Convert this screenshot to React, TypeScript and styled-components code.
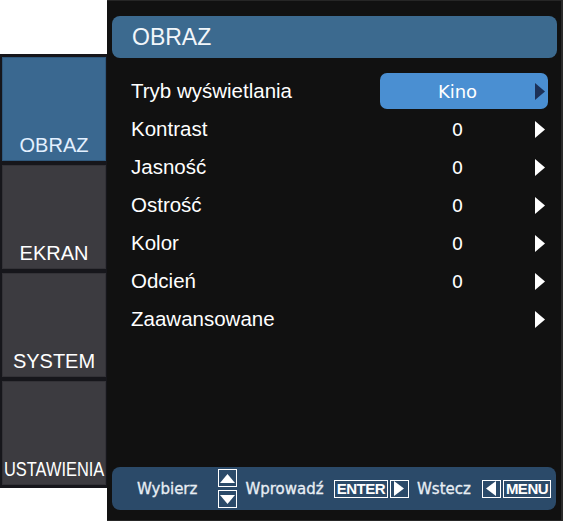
import React from "react";
import styled, { createGlobalStyle } from "styled-components";

type TabProp = {
	isActive?: boolean;
	squeeze?: number;
};

type PillProp = {
	isSelected?: boolean;
};

const tabs = ["OBRAZ", "EKRAN", "SYSTEM", "USTAWIENIA"];

const rows: { label: string; value?: string }[] = [
	{ label: "Tryb wyświetlania", value: "Kino" },
	{ label: "Kontrast", value: "0" },
	{ label: "Jasność", value: "0" },
	{ label: "Ostrość", value: "0" },
	{ label: "Kolor", value: "0" },
	{ label: "Odcień", value: "0" },
	{ label: "Zaawansowane" },
];

const Triangle = ({
	dir,
	color,
	w,
	h,
}: {
	dir: "left" | "right" | "up" | "down";
	color: string;
	w: number;
	h: number;
}) => {
	const pts = {
		right: `0,0 ${w},${h / 2} 0,${h}`,
		left: `${w},0 0,${h / 2} ${w},${h}`,
		up: `0,${h} ${w / 2},0 ${w},${h}`,
		down: `0,0 ${w},0 ${w / 2},${h}`,
	}[dir];
	return (
		<svg width={w} height={h} viewBox={`0 0 ${w} ${h}`}>
			<polygon points={pts} fill={color} />
		</svg>
	);
};

export default function App() {
	return (
		<>
			<GlobalStyle />
			<StyledScreen>
				<StyledSideTabs>
					{tabs.map((t, i) => (
						<StyledTab key={t} isActive={i === 0}>
							<StyledTabLabel squeeze={t === "USTAWIENIA" ? 0.82 : 1}>
								{t}
							</StyledTabLabel>
						</StyledTab>
					))}
				</StyledSideTabs>
				<StyledPanel>
					<StyledTitleBar>OBRAZ</StyledTitleBar>
					<StyledMenu>
						{rows.map((row, i) => (
							<StyledRow key={row.label}>
								<StyledLabel>{row.label}</StyledLabel>
								<StyledValuePill isSelected={i === 0}>
									<StyledValue>{row.value ?? ""}</StyledValue>
									<StyledArrow>
										<Triangle
											dir="right"
											w={10}
											h={17}
											color={i === 0 ? "#1c3158" : "#ffffff"}
										/>
									</StyledArrow>
								</StyledValuePill>
							</StyledRow>
						))}
					</StyledMenu>
					<StyledFooter>
						<StyledHint gap={21}>Wybierz</StyledHint>
						<StyledUpDown>
							<StyledKeyBox>
								<Triangle dir="up" w={15} h={9} color="#ffffff" />
							</StyledKeyBox>
							<StyledKeyBox>
								<Triangle dir="down" w={15} h={9} color="#ffffff" />
							</StyledKeyBox>
						</StyledUpDown>
						<StyledHint gap={10}>Wprowadź</StyledHint>
						<StyledKeyGroup>
							<StyledKeyText>ENTER</StyledKeyText>
							<StyledKeyBox>
								<Triangle dir="right" w={10} h={15} color="#ffffff" />
							</StyledKeyBox>
						</StyledKeyGroup>
						<StyledHint gap={11}>Wstecz</StyledHint>
						<StyledKeyGroup>
							<StyledKeyBox>
								<Triangle dir="left" w={10} h={15} color="#ffffff" />
							</StyledKeyBox>
							<StyledKeyText>MENU</StyledKeyText>
						</StyledKeyGroup>
					</StyledFooter>
				</StyledPanel>
			</StyledScreen>
		</>
	);
}

const GlobalStyle = createGlobalStyle`
	html, body {
		margin: 0;
		padding: 0;
		background: #ffffff;
	}
	* {
		box-sizing: border-box;
	}
`;

const StyledScreen = styled.div`
	display: flex;
	align-items: flex-start;
	width: 563px;
	height: 521px;
	font-family: "Liberation Sans", Arial, sans-serif;
`;

const StyledSideTabs = styled.div`
	display: flex;
	flex-direction: column;
	gap: 4px;
	width: 107px;
	margin-top: 54px;
	padding: 3px 1px 3px 2px;
	background: #16161b;
`;

const StyledTab = styled.div<TabProp>`
	display: flex;
	align-items: flex-end;
	justify-content: center;
	height: 104px;
	padding-bottom: 5px;
	background: ${(p) => (p.isActive ? "#3a6890" : "#3c3b40")};
	border: 1px solid ${(p) => (p.isActive ? "#2f587c" : "#333237")};
	color: ${(p) => (p.isActive ? "#e3f0ff" : "#ffffff")};
	overflow: visible;
`;

const StyledTabLabel = styled.span<TabProp>`
	font-size: 20px;
	line-height: 20px;
	white-space: nowrap;
	transform: scaleX(${(p) => p.squeeze ?? 1});
`;

const StyledPanel = styled.div`
	display: flex;
	flex-direction: column;
	width: 456px;
	height: 521px;
	background: #111111;
	border-top: 1px solid #262626;
	border-right: 2px solid #2a2a2a;
	border-bottom: 1px solid #262626;
`;

const StyledTitleBar = styled.div`
	margin: 15px 4px 0 5px;
	height: 42px;
	padding-left: 20px;
	display: flex;
	align-items: center;
	background: #3c6a8f;
	border-radius: 8px;
	color: #f2f6fa;
	font-size: 23px;
`;

const StyledMenu = styled.div`
	display: flex;
	flex-direction: column;
	margin-top: 14px;
	padding: 0 13px 0 24px;
`;

const StyledRow = styled.div`
	display: flex;
	align-items: center;
	height: 38px;
`;

const StyledLabel = styled.div`
	flex: 1;
	color: #ffffff;
	font-size: 20.5px;
`;

const StyledValuePill = styled.div<PillProp>`
	display: flex;
	align-items: center;
	width: 168px;
	height: 36px;
	padding-right: 3px;
	border-radius: 7px;
	background: ${(p) => (p.isSelected ? "#4a8fd2" : "transparent")};
`;

const StyledValue = styled.div`
	flex: 1;
	text-align: center;
	color: #ffffff;
	font-family: "DejaVu Sans", Verdana, sans-serif;
	font-size: 18px;
`;

const StyledArrow = styled.div`
	display: flex;
	width: 10px;
`;

const StyledFooter = styled.div`
	display: flex;
	align-items: center;
	margin: auto 5px 10px 5px;
	height: 43px;
	padding-left: 25px;
	background: #2b4a69;
	border-radius: 8px;
	color: #e8eef4;
	font-family: "DejaVu Sans", Verdana, sans-serif;
	font-size: 15px;
	-webkit-text-stroke: 0.3px #e8eef4;
`;

const StyledHint = styled.span<{ gap: number }>`
	margin-right: ${(p) => p.gap}px;
`;

const StyledUpDown = styled.div`
	display: flex;
	flex-direction: column;
	gap: 3px;
	margin-right: 8px;
`;

const StyledKeyBox = styled.div`
	display: flex;
	align-items: center;
	justify-content: center;
	width: 19px;
	height: 18px;
	border: 1px solid #ffffff;
`;

const StyledKeyGroup = styled.div`
	display: flex;
	align-items: center;
	gap: 2px;
	margin-right: 8px;
`;

const StyledKeyText = styled.div`
	display: flex;
	align-items: center;
	height: 18px;
	padding: 0 2px;
	border: 1px solid #ffffff;
	color: #ffffff;
	font-family: "Liberation Sans", Arial, sans-serif;
	font-weight: bold;
	font-size: 15px;
	letter-spacing: -0.5px;
	-webkit-text-stroke: 0;
`;
